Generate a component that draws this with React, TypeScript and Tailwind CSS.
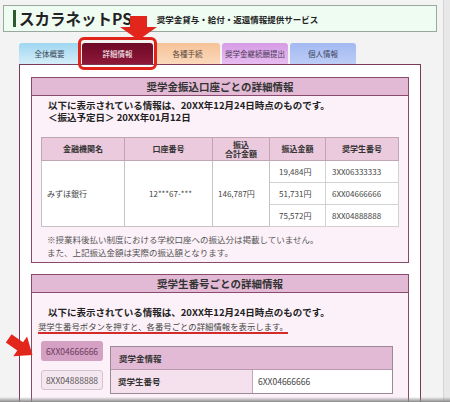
import type { ReactNode } from "react";

const tabs = [
  { label: "全体概要", className: "w-[61px] bg-linear-to-b from-[#9fd6f1] to-[#d5eef9] text-[#3c4a55]" },
  { label: "詳細情報", className: "w-[71px] bg-linear-to-b from-[#6e0826] to-[#8e1838] text-white" },
  { label: "各種手続", className: "w-[65px] bg-linear-to-b from-[#f6c298] to-[#fbd9bb] text-[#5a4a40]" },
  { label: "奨学金継続願提出", className: "w-[66px] bg-linear-to-b from-[#d69be6] to-[#e6bdf0] text-[#4e3a58]" },
  { label: "個人情報", className: "w-[66px] bg-linear-to-b from-[#a3b9f2] to-[#bccdf5] text-[#3c4660]" },
];

const payments = [
  { amount: "19,484円", number: "3XX06333333" },
  { amount: "51,731円", number: "6XX04666666" },
  { amount: "75,572円", number: "8XX04888888" },
];

const SectionBox = ({ title, children }: { title: string; children: ReactNode }) => (
  <div className="border border-[#8a4a6c] bg-[#fcf1f8]">
    <div className="h-[18px] border-b border-[#8a4a6c] bg-[#e3bad6] flex items-center justify-center text-[10.5px] font-bold text-[#333]">
      {title}
    </div>
    {children}
  </div>
);

const App = () => {
  return (
    <div className="relative w-[450px] h-[402px] overflow-hidden bg-[#f3f3f3] flex font-['Noto_Sans_CJK_JP',sans-serif] text-[#333]">
      <div className="w-[443px] flex flex-col overflow-hidden">
        {/* site header */}
        <div className="shrink-0 mt-[5px] ml-[3px] w-[434px] h-[27px] border border-[#9aa79c] bg-[#effcf2] flex items-center">
          <div className="ml-[9px] w-[3px] h-[17px] bg-[#2f5a2f]" />
          <span className="ml-[3px] text-[15.5px] font-bold leading-none text-[#222]">スカラネットPS</span>
          <span className="ml-[25px] mt-[2px] text-[8.5px] font-bold leading-none text-[#222]">
            奨学金貸与・給付・返還情報提供サービス
          </span>
        </div>

        {/* tabs */}
        <div className="shrink-0 mt-[11px] ml-[19px] flex gap-[2px] h-[21px]">
          {tabs.map((t) => (
            <div
              key={t.label}
              className={`rounded-t-[3px] flex items-center justify-center text-[7.5px] leading-none ${t.className}`}
            >
              {t.label}
            </div>
          ))}
        </div>

        {/* main panel */}
        <div className="shrink-0 ml-[19px] w-[402px] border border-[#7a3a5a] bg-white px-[11px] pt-[12px]">
          <SectionBox title="奨学金振込口座ごとの詳細情報">
            <div className="pl-[16px] pt-[3px] text-[9.5px] font-bold leading-[12px] text-[#222]">
              <p>以下に表示されている情報は、20XX年12月24日時点のものです。</p>
              <p>＜振込予定日＞ 20XX年01月12日</p>
            </div>
            <table className="mt-[14px] ml-[9px] w-[357px] table-fixed border-collapse border border-[#8c8c8c] text-[8px]">
              <colgroup>
                <col className="w-[83px]" />
                <col className="w-[88px]" />
                <col className="w-[57px]" />
                <col className="w-[56px]" />
                <col className="w-[73px]" />
              </colgroup>
              <thead>
                <tr className="h-[23px] bg-[#eccadd] font-bold text-[#333]">
                  <th className="border border-[#bfa6b4] font-bold">金融機関名</th>
                  <th className="border border-[#bfa6b4] font-bold">口座番号</th>
                  <th className="border border-[#bfa6b4] font-bold leading-[9px]">
                    振込
                    <br />
                    合計金額
                  </th>
                  <th className="border border-[#bfa6b4] font-bold">振込金額</th>
                  <th className="border border-[#bfa6b4] font-bold">奨学生番号</th>
                </tr>
              </thead>
              <tbody className="bg-white text-[#444]">
                {payments.map((p, i) => (
                  <tr key={p.number} className="h-[22px]">
                    {i === 0 && (
                      <>
                        <td rowSpan={3} className="border border-[#c4c4c4] pl-[5px]">みずほ銀行</td>
                        <td rowSpan={3} className="border border-[#c4c4c4] pl-[24px]">12***67-***</td>
                        <td rowSpan={3} className="border border-[#c4c4c4] pl-[5px]">146,787円</td>
                      </>
                    )}
                    <td className="border border-[#d2d2d2] pl-[9px]">{p.amount}</td>
                    <td className="border border-[#d2d2d2] pl-[6px]">{p.number}</td>
                  </tr>
                ))}
              </tbody>
            </table>
            <div className="mt-[6px] pb-[3px] pl-[15px] text-[8.5px] leading-[13px] text-[#555]">
              <p>※授業料後払い制度における学校口座への振込分は掲載していません。</p>
              <p>また、上記振込金額は実際の振込額となります。</p>
            </div>
          </SectionBox>

          <div className="mt-[11px]">
            <SectionBox title="奨学生番号ごとの詳細情報">
              <p className="pl-[16px] pt-[13px] text-[9.5px] font-bold leading-[12px] text-[#222]">
                以下に表示されている情報は、20XX年12月24日時点のものです。
              </p>
              <div className="pl-[6px] mt-[2px] flex">
                <span className="border-b-2 border-[#d42a2a] text-[8.4px] leading-[12px] text-[#444]">
                  奨学生番号ボタンを押すと、各番号ごとの詳細情報を表示します。
                </span>
              </div>
              <div className="mt-[7px] ml-[9px] flex gap-[7px]">
                <div className="flex flex-col gap-[9px]">
                  <button className="w-[62px] h-[20px] rounded-[3px] bg-[#d4a0c4] text-[8.5px] text-[#6a3a5a]">
                    6XX04666666
                  </button>
                  <button className="w-[62px] h-[20px] rounded-[3px] border border-[#d8c0cc] bg-[#f5e7ef] text-[8.5px] text-[#555]">
                    8XX04888888
                  </button>
                </div>
                <div className="mt-[5px] w-[283px] border border-[#9a8a94]">
                  <div className="h-[23px] bg-[#e3bad6] border-b border-[#b89aac] flex items-center pl-[8px] text-[8.5px] font-bold text-[#333]">
                    奨学金情報
                  </div>
                  <div className="flex h-[23px] text-[8.5px]">
                    <div className="w-[142px] bg-[#f5e1ed] border-r border-[#c4aab8] flex items-center pl-[7px] font-bold text-[#333]">
                      奨学生番号
                    </div>
                    <div className="flex-1 bg-white flex items-center pl-[5px] text-[#444]">6XX04666666</div>
                  </div>
                </div>
              </div>
              <div className="h-[40px]" />
            </SectionBox>
          </div>
        </div>
      </div>

      {/* right edge */}
      <div className="w-[7px] border-l border-[#d4d4d4] bg-[#e8e8e8]" />

      {/* highlight on the selected tab */}
      <div className="absolute left-[78px] top-[37px] w-[79px] h-[33px] border-[3px] border-[#e0241c] rounded-[6px]" />

      {/* arrow above the tab */}
      <svg className="absolute left-[120px] top-[16px]" width="37" height="24" viewBox="0 0 37 24">
        <polygon points="10,0 27,0 27,11 37,11 18.5,24 0,11 10,11" fill="#e3261c" />
      </svg>

      {/* arrow at the number buttons */}
      <svg className="absolute left-[5px] top-[329px]" width="32" height="36" viewBox="0 0 32 36">
        <g transform="translate(16 18) rotate(35)">
          <polygon points="-15,-5 -1,-5 -1,-12 14,0 -1,12 -1,5 -15,5" fill="#e3261c" />
        </g>
      </svg>

      {/* bottom edge shade */}
      <div className="absolute left-0 right-0 bottom-0 h-[5px] bg-linear-to-t from-[#8a8a8a] to-transparent" />
    </div>
  );
};

export default App;
